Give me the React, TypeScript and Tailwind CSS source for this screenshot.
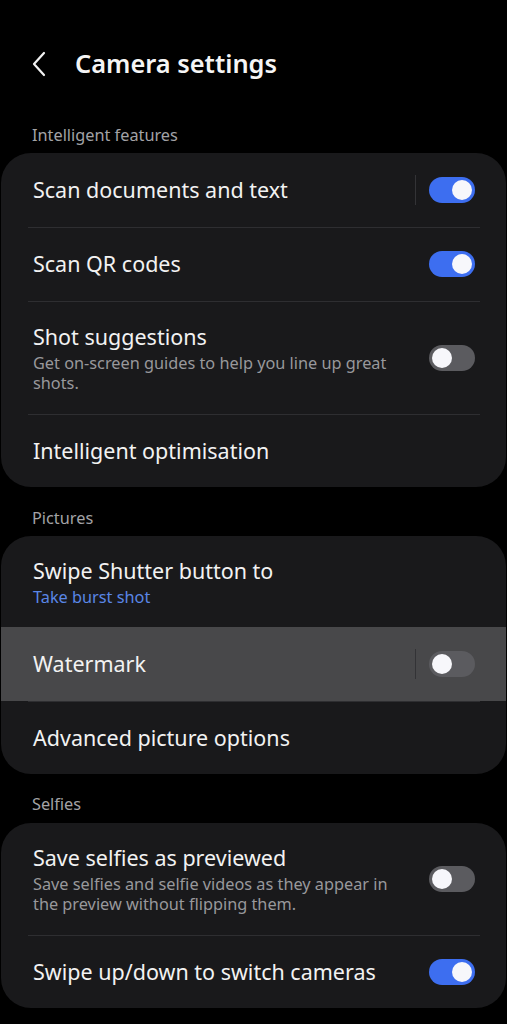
import React from "react";

type Row = {
  title: string;
  subtitle?: string;
  subtitleBlue?: boolean;
  toggle?: "on" | "off";
  divider?: boolean;
  highlight?: boolean;
  height: string;
};

function Toggle({ on }: { on: boolean }) {
  return (
    <div
      className={
        on
          ? "flex h-[26px] w-[46px] shrink-0 items-center justify-end rounded-full bg-[#3d6ef0] px-[3px]"
          : "flex h-[26px] w-[46px] shrink-0 items-center justify-start rounded-full bg-[#5b5b5f] px-[3px]"
      }
    >
      <div className="h-[20px] w-[20px] rounded-full bg-[#f7f7fb]" />
    </div>
  );
}

function SettingRow({ row, first }: { row: Row; first: boolean }) {
  return (
    <div
      className={
        (row.highlight ? "bg-[#48484a] " : "") +
        "relative flex items-center pl-[32px] pr-[31px] " +
        row.height
      }
    >
      {!first && !row.highlight ? (
        <div className="absolute left-[27px] right-[26px] top-0 h-px bg-[#2e2e31]" />
      ) : null}
      <div className="min-w-0 flex-1 pr-[32px]">
        <div className="text-[21.5px] leading-[28px] text-[#f2f2f2]">{row.title}</div>
        {row.subtitle ? (
          <div
            className={
              row.subtitleBlue
                ? "mt-[2px] text-[16.3px] leading-[20px] text-[#5a86e6]"
                : "mt-[2px] text-[16.3px] leading-[20px] text-[#98989b]"
            }
          >
            {row.subtitle}
          </div>
        ) : null}
      </div>
      {row.toggle ? (
        <div className="flex items-center">
          {row.divider ? <div className="mr-[13px] h-[30px] w-px bg-[#333336]" /> : null}
          <Toggle on={row.toggle === "on"} />
        </div>
      ) : null}
    </div>
  );
}

function Section({ label, rows, labelClass }: { label: string; rows: Row[]; labelClass: string }) {
  return (
    <section>
      <div className={"pl-[32px] text-[16.3px] leading-[20px] text-[#a3a3a6] " + labelClass}>
        {label}
      </div>
      <div className="mx-[1px] overflow-hidden rounded-[30px] bg-[#19191b]">
        {rows.map((row, i) => (
          <SettingRow key={row.title} row={row} first={i === 0} />
        ))}
      </div>
    </section>
  );
}

export default function App() {
  return (
    <div
      className="min-h-[1024px] w-[507px] bg-black text-white"
      style={{ fontFamily: "'Noto Sans', Roboto, sans-serif" }}
    >
      <header className="flex h-[125px] items-start pt-[45px]">
        <div className="flex w-[71px] justify-center pl-[6px]">
          <svg width="16" height="26" viewBox="0 0 16 26" fill="none" className="mt-[6px]">
            <path d="M13 2L3 13l10 11" stroke="#f2f2f2" strokeWidth="2.2" strokeLinecap="round" strokeLinejoin="round" />
          </svg>
        </div>
        <h1 className="pl-[4px] text-[25.4px] font-semibold leading-[36px] text-[#f5f5f5]">
          Camera settings
        </h1>
      </header>

      <Section
        label="Intelligent features"
        labelClass="mb-[8px]"
        rows={[
          { title: "Scan documents and text", toggle: "on", divider: true, height: "h-[74px]" },
          { title: "Scan QR codes", toggle: "on", height: "h-[74px]" },
          {
            title: "Shot suggestions",
            subtitle: "Get on-screen guides to help you line up great shots.",
            toggle: "off",
            height: "h-[113px]",
          },
          { title: "Intelligent optimisation", height: "h-[73px]" },
        ]}
      />

      <div className="pt-[21px]">
        <Section
          label="Pictures"
          labelClass="mb-[8px]"
          rows={[
            {
              title: "Swipe Shutter button to",
              subtitle: "Take burst shot",
              subtitleBlue: true,
              height: "h-[91px]",
            },
            { title: "Watermark", toggle: "off", divider: true, highlight: true, height: "h-[74px]" },
            { title: "Advanced picture options", height: "h-[73px]" },
          ]}
        />
      </div>

      <div className="pt-[20px]">
        <Section
          label="Selfies"
          labelClass="mb-[9px]"
          rows={[
            {
              title: "Save selfies as previewed",
              subtitle: "Save selfies and selfie videos as they appear in the preview without flipping them.",
              toggle: "off",
              height: "h-[112px]",
            },
            { title: "Swipe up/down to switch cameras", toggle: "on", height: "h-[73px]" },
          ]}
        />
      </div>
    </div>
  );
}
